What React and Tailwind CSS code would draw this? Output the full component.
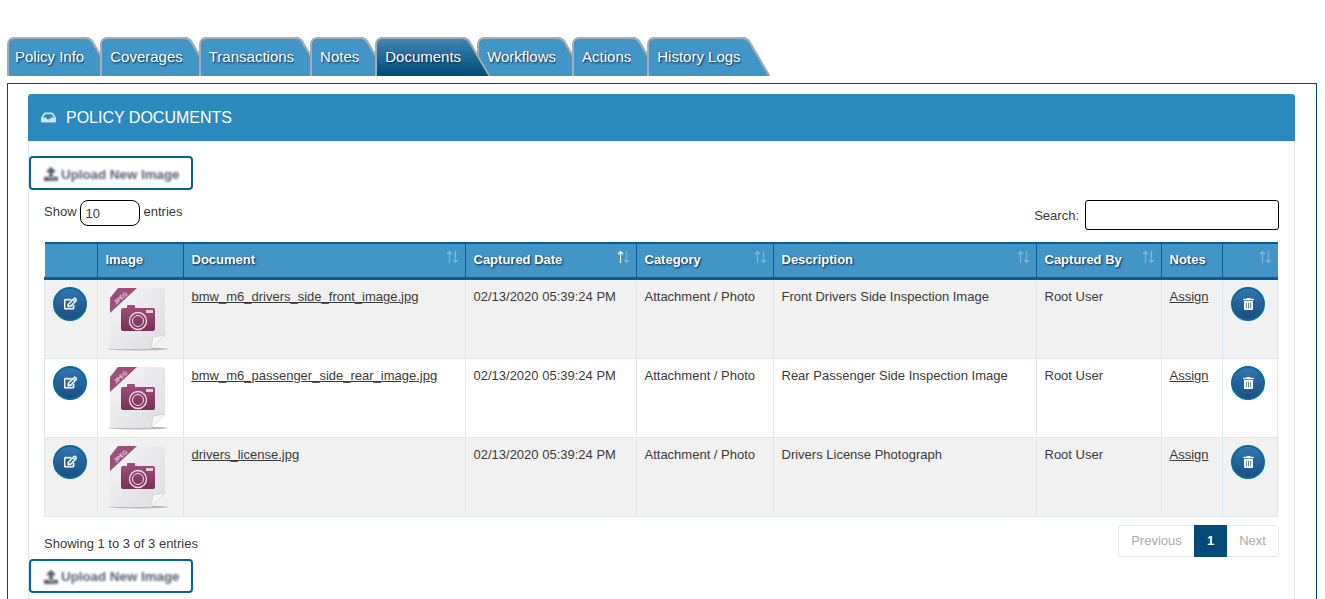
import React from 'react';
import { FaInbox, FaUpload, FaRegEdit, FaTrashAlt } from 'react-icons/fa';

const tabs = ['Policy Info', 'Coverages', 'Transactions', 'Notes', 'Documents', 'Workflows', 'Actions', 'History Logs'];

const columns = [
  { label: '', width: 'w-[53px]', sort: false },
  { label: 'Image', width: 'w-[86px]', sort: false },
  { label: 'Document', width: 'w-[282px]', sort: true },
  { label: 'Captured Date', width: 'w-[171px]', sort: true, active: true },
  { label: 'Category', width: 'w-[137px]', sort: true },
  { label: 'Description', width: 'w-[263px]', sort: true },
  { label: 'Captured By', width: 'w-[125px]', sort: true },
  { label: 'Notes', width: 'w-[61px]', sort: false },
  { label: '', width: 'w-[55px]', sort: true },
];

const rows = [
  { file: 'bmw_m6_drivers_side_front_image.jpg', description: 'Front Drivers Side Inspection Image', height: 'h-[80px]', bg: 'bg-[#f1f1f1]' },
  { file: 'bmw_m6_passenger_side_rear_image.jpg', description: 'Rear Passenger Side Inspection Image', height: 'h-[79px]', bg: 'bg-white' },
  { file: 'drivers_license.jpg', description: 'Drivers License Photograph', height: 'h-[79px]', bg: 'bg-[#f1f1f1]' },
];

const Tab = ({ label, index }) => {
  const active = label === 'Documents';
  const first = index === 0;
  const gradientId = `tab-${index}`;
  return (
    <div className={`flex h-[39px] mr-[-13px] ${active ? 'relative z-10' : ''}`}>
      <div
        className={`flex items-center h-full border-l-2 border-t-2 border-[#a8acb0] rounded-tl-[7px] text-[15px] text-white [text-shadow:1px_1px_2px_rgba(0,30,60,0.95)] ${
          first ? 'pl-[6px]' : 'pl-[8px]'
        } ${active ? 'bg-gradient-to-b from-[#3d87b5] to-[#004a78]' : 'bg-[#4295c7]'}`}
      >
        <span>{label}</span>
      </div>
      <svg width="29" height="39" viewBox="0 0 29 39" className="block shrink-0">
        <defs>
          <linearGradient id={gradientId} x1="0" y1="0" x2="0" y2="1">
            <stop offset="0" stopColor="#3d87b5" />
            <stop offset="1" stopColor="#004a78" />
          </linearGradient>
        </defs>
        <path d="M0 0H1Q6 0 9 4L29 39H0Z" fill={active ? `url(#${gradientId})` : '#4295c7'} />
        <path d="M0 1H1Q5.5 1 8.2 4.6L28.5 39" fill="none" stroke="#a8acb0" strokeWidth="2" />
      </svg>
    </div>
  );
};

const UploadButton = () => (
  <button className="flex items-center w-[164px] h-[34px] pl-[13px] pt-[3px] bg-white border-2 border-[#006494] rounded-[4px] text-[13.33px] font-bold text-[#566172]">
    <span className="flex items-center gap-[3px] [filter:blur(0.8px)]">
      <FaUpload className="w-[14px] h-[14px] text-[#565c6c]" />
      Upload New Image
    </span>
  </button>
);

const SortIcon = ({ active }) => (
  <svg width="13" height="14" viewBox="0 0 13 14" fill="none" className="block">
    <path d="M3.5 13V1.5M1 4L3.5 1.5L6 4" stroke={active ? '#ffffff' : '#7fb6d9'} strokeWidth="1.2" />
    <path d="M9.5 1V12.5M7 10L9.5 12.5L12 10" stroke="#7fb6d9" strokeWidth="1.2" />
  </svg>
);

const RoundButton = ({ children }) => (
  <button className="flex items-center justify-center w-[34px] h-[34px] rounded-full border-2 border-[#0a6a97] bg-gradient-to-b from-[#3076b3] to-[#1c4f80] text-white text-[13px]">
    {children}
  </button>
);

const JpegIcon = () => (
  <svg width="62" height="64" viewBox="0 0 62 64" className="block">
    <defs>
      <linearGradient id="page" x1="0" y1="0" x2="1" y2="1">
        <stop offset="0" stopColor="#f6f5f7" />
        <stop offset="1" stopColor="#dcdbe0" />
      </linearGradient>
      <linearGradient id="camera" x1="0" y1="0" x2="0" y2="1">
        <stop offset="0" stopColor="#a04f7c" />
        <stop offset="1" stopColor="#7b2f58" />
      </linearGradient>
    </defs>
    <ellipse cx="31" cy="62" rx="30" ry="1.4" fill="#b9b9b9" />
    <path d="M5 1H56Q58 1 58 3V48L44 62H5Q3 62 3 60V3Q3 1 5 1Z" fill="url(#page)" />
    <path d="M58 48L44 62L46 50Z" fill="#f7f7f7" stroke="#cfcfcf" strokeWidth="0.7" />
    <path d="M11 1H30L3 26V11Z" fill="#9c4f78" />
    <text x="0" y="0" transform="translate(9 18) rotate(-42)" fontSize="6" fontWeight="700" fill="#e8d5e0" fontFamily="Liberation Sans, sans-serif">JPEG</text>
    <path d="M16 21H20V19Q20 18 21 18H27Q28 18 28 19V21H46Q48 21 48 23V42Q48 44 46 44H16Q14 44 14 42V23Q14 21 16 21Z" fill="url(#camera)" />
    <rect x="39" y="23" width="7" height="3" fill="#e4cfdb" />
    <circle cx="31" cy="34" r="8.5" fill="none" stroke="#f1e3eb" strokeWidth="1.3" />
    <circle cx="31" cy="34" r="5.5" fill="none" stroke="#f1e3eb" strokeWidth="1" />
  </svg>
);

export default function App() {
  return (
    <div className="h-screen overflow-hidden bg-white pt-[37px] text-[#3a3a3a] font-['Liberation_Sans',Arial,sans-serif]">
      <div className="flex pl-[7px]">
        {tabs.map((t, i) => (
          <Tab key={t} label={t} index={i} />
        ))}
      </div>

      <div className="ml-[7px] mr-[8px] mt-[7px] border border-b-0 border-[#004b78] pt-[10px] pl-[20px] pr-[21px]">
        <div className="flex items-center h-[47px] pl-[13px] bg-[#2b89bd] rounded-t-[3px] text-white text-[16px]">
          <FaInbox className="w-[15px] h-[15px] text-[#cfe2ee] mr-[10px]" />
          POLICY DOCUMENTS
        </div>

        <div className="border-x border-[#d9e8f3] pt-[15px] pb-[20px]">
          <UploadButton />

          <div className="mx-[15px]">
            <div className="flex justify-between h-[52px] pt-[10px] text-[13px]">
              <div className="flex items-start">
                <span className="mt-[2px]">Show</span>
                <input
                  defaultValue="10"
                  className="w-[60px] h-[26px] ml-[3px] mr-[4px] px-[5px] border border-black rounded-[8px] text-[13px] outline-none"
                />
                <span className="mt-[2px]">entries</span>
              </div>
              <div className="flex items-center self-start">
                <span className="mr-[6px] mt-[1px]">Search:</span>
                <input className="w-[194px] h-[30px] border border-black rounded-[3px] outline-none" />
              </div>
            </div>

            <table className="table-fixed border-collapse w-[1233px] text-[13px]">
              <thead>
                <tr className="h-[35px] bg-[#4295c7] text-white text-left">
                  {columns.map((c, i) => (
                    <th
                      key={i}
                      className={`${c.width} relative border-x border-t-2 border-b-[3px] border-x-[#0b5c99] border-y-[#0b5c99] first:border-l-0 last:border-r-0 px-[7.5px] pb-[2px] text-[13px] font-bold [text-shadow:1px_1px_2px_rgba(0,30,60,0.95)]`}
                    >
                      {c.label}
                      {c.sort && (
                        <span className="absolute right-[6px] top-[6px]">
                          <SortIcon active={c.active} />
                        </span>
                      )}
                    </th>
                  ))}
                </tr>
              </thead>
              <tbody>
                {rows.map((r) => (
                  <tr key={r.file} className={`${r.height} ${r.bg}`}>
                    <td className="border border-[#dfe8f1] align-top pt-[7px] pl-[8px]">
                      <RoundButton>
                        <FaRegEdit stroke="currentColor" strokeWidth={24} />
                      </RoundButton>
                    </td>
                    <td className="border border-[#dfe8f1] align-top pt-[7px] pl-[9px]">
                      <JpegIcon />
                    </td>
                    <td className="border border-[#dfe8f1] align-top pt-[7px] pl-[7.5px] pr-[8px]">
                      <a className="underline" href="#doc">{r.file}</a>
                    </td>
                    <td className="border border-[#dfe8f1] align-top pt-[7px] pl-[7.5px] pr-[8px]">02/13/2020 05:39:24 PM</td>
                    <td className="border border-[#dfe8f1] align-top pt-[7px] pl-[7.5px] pr-[8px]">Attachment / Photo</td>
                    <td className="border border-[#dfe8f1] align-top pt-[7px] pl-[7.5px] pr-[8px]">{r.description}</td>
                    <td className="border border-[#dfe8f1] align-top pt-[7px] pl-[7.5px] pr-[8px]">Root User</td>
                    <td className="border border-[#dfe8f1] align-top pt-[7px] pl-[7.5px] pr-[8px]">
                      <a className="underline" href="#assign">Assign</a>
                    </td>
                    <td className="border border-[#dfe8f1] align-top pt-[7px] pl-[8px]">
                      <RoundButton>
                        <FaTrashAlt className="w-[11px] h-[12px]" />
                      </RoundButton>
                    </td>
                  </tr>
                ))}
              </tbody>
            </table>

            <div className="flex justify-between items-center mt-[8px] h-[32px] text-[13px]">
              <span className="mt-[6px]">Showing 1 to 3 of 3 entries</span>
              <div className="flex h-[32px] border border-[#e6e8ea] rounded-[3px] text-[13px] font-normal">
                <span className="flex items-center justify-center w-[75px] text-[#aaa]">Previous</span>
                <span className="flex items-center justify-center w-[33px] -my-px bg-[#004b78] text-white font-bold">1</span>
                <span className="flex items-center justify-center w-[51px] text-[#aaa]">Next</span>
              </div>
            </div>
          </div>

          <div className="mt-[2px]">
            <UploadButton />
          </div>
        </div>
      </div>
    </div>
  );
}
